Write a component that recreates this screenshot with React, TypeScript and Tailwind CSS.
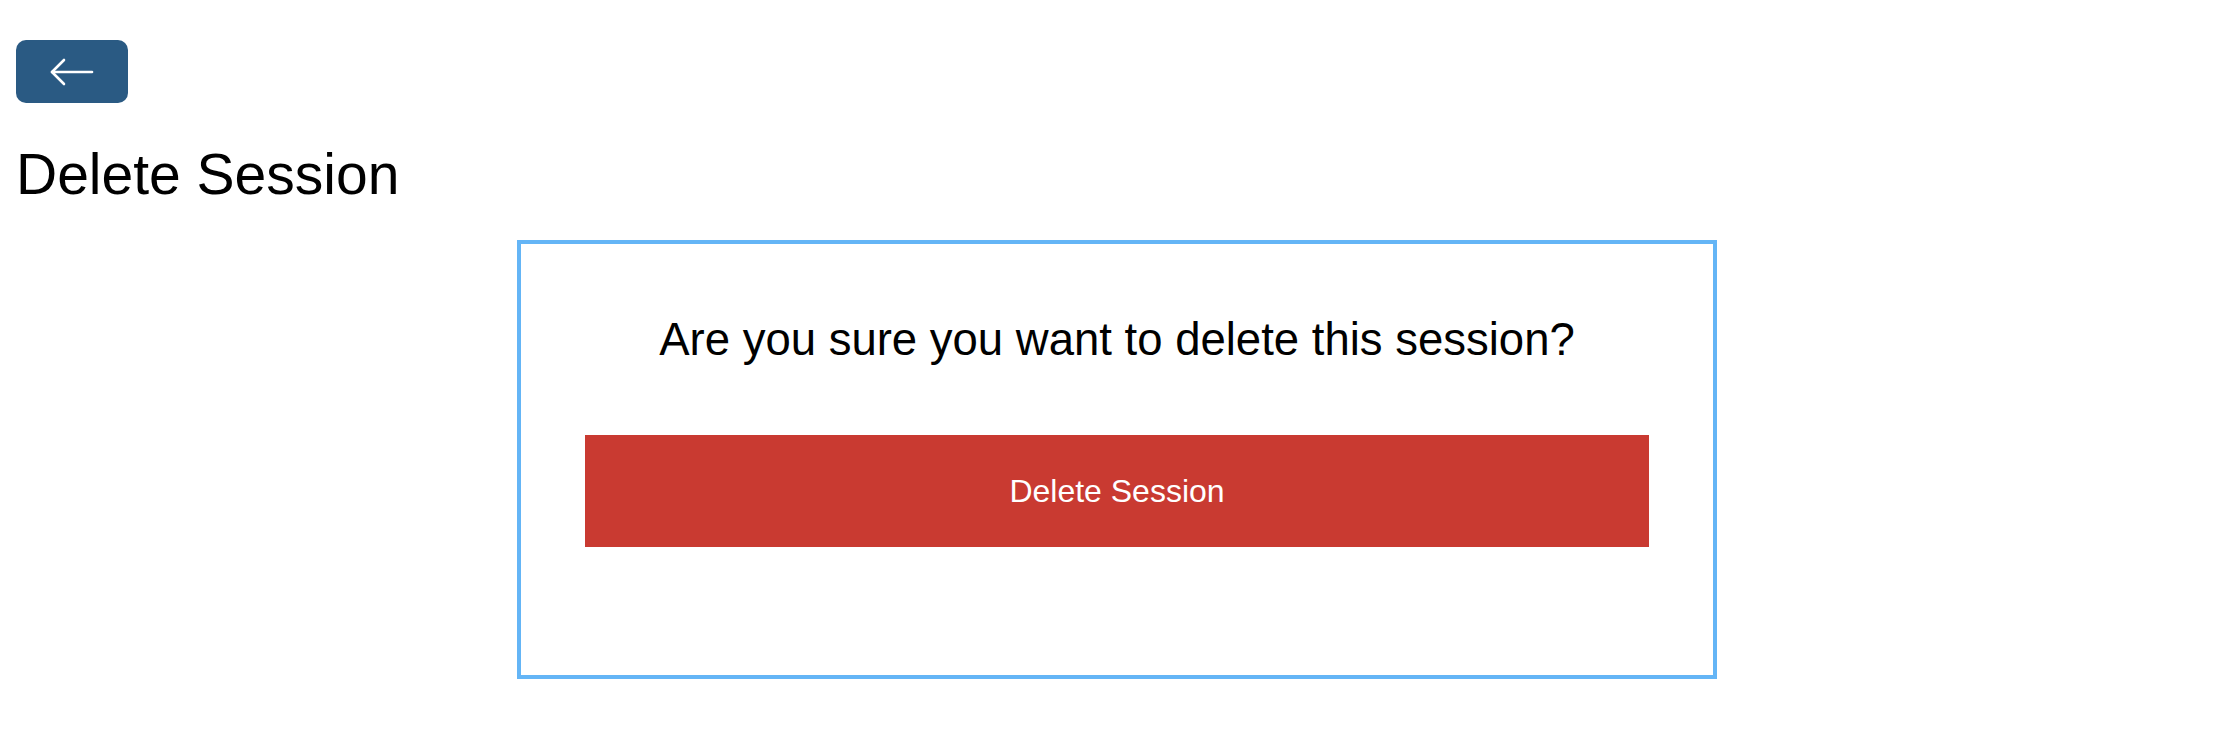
import React from 'react';

const BackArrow: React.FC = () => (
  <svg width="44" height="28" viewBox="0 0 44 28" fill="none" stroke="white" strokeWidth="2.6" strokeLinecap="round" strokeLinejoin="round">
    <path d="M2 14H42" />
    <path d="M14 2L2 14L14 26" />
  </svg>
);

const App: React.FC = () => {
  return (
    <div className="min-h-screen bg-white px-4 pt-10 pb-10 text-black" style={{ fontFamily: '"Liberation Sans", Arial, sans-serif' }}>
      <button className="flex h-[63px] w-[112px] items-center justify-center rounded-[10px] bg-[#2a5a83]">
        <BackArrow />
      </button>

      <h1 className="mt-[43px] text-[57px] leading-none font-normal">Delete Session</h1>

      <div className="mt-[37px] flex justify-center pl-[10px]">
        <div className="w-[1200px] border-4 border-[#64b5f6] bg-white px-[64px] pt-[73px] pb-[128px]">
          <p className="text-center text-[45.5px] leading-none">Are you sure you want to delete this session?</p>
          <button className="mt-[72px] flex h-[112px] w-full items-center justify-center bg-[#c93a31] text-[32px] text-white">
            Delete Session
          </button>
        </div>
      </div>
    </div>
  );
};

export default App;
